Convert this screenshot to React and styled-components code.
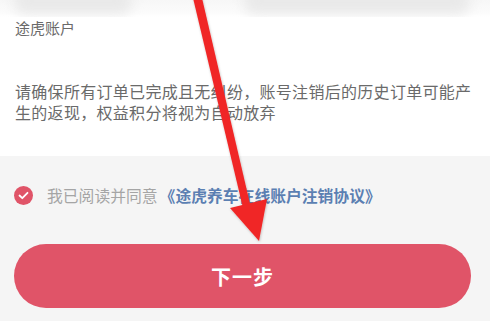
import React from "react";
import styled, { createGlobalStyle } from "styled-components";

const Global = createGlobalStyle`
  html, body { margin: 0; padding: 0; }
  body {
    background: #f5f5f5;
    font-family: "Noto Sans CJK SC", "Noto Sans", sans-serif;
    width: 490px;
    height: 321px;
    overflow: hidden;
  }
`;

const Page = styled.div`
  position: relative;
  width: 490px;
  height: 321px;
  display: flex;
  flex-direction: column;
  background: #f5f5f5;
`;

const WhiteSection = styled.section`
  background: #ffffff;
  height: 156px;
  display: flex;
  flex-direction: column;
`;

const BlurStrip = styled.div`
  height: 17px;
  display: flex;
  gap: 112px;
  padding: 0 20px 0 14px;
  overflow: hidden;
  background: linear-gradient(#f7f7f7, #fbfbfb 70%, #ffffff);
`;

const Blob = styled.div`
  height: 26px;
  margin-top: -12px;
  flex: ${(p) => p.$flex};
  border-radius: 12px;
  background: #e9e9e9;
  filter: blur(6px);
`;

const Label = styled.div`
  padding: 0 15px;
  margin-top: 1px;
  font-size: 15px;
  line-height: 20px;
  color: #6a6a6a;
`;

const Notice = styled.p`
  margin: 43px 0 0;
  padding: 0 14px 0 15px;
  font-size: 16px;
  letter-spacing: 0.3px;
  line-height: 21px;
  color: #6a6a6a;
`;

const AgreeRow = styled.div`
  display: flex;
  align-items: center;
  padding: 0 14px;
  margin-top: 28px;
  height: 22px;
  font-size: 15.8px;
`;

const CheckCircle = styled.span`
  width: 19px;
  height: 19px;
  border-radius: 50%;
  background: #e05468;
  display: inline-flex;
  align-items: center;
  justify-content: center;
  margin-right: 14px;
`;

const AgreeText = styled.span`
  color: #a5a5a5;
`;

const Link = styled.span`
  color: #5b7fb2;
  font-weight: 700;
  margin-left: 2px;
`;

const Button = styled.button`
  margin: 38px 19px 0 14px;
  height: 64px;
  border: none;
  border-radius: 32px;
  background: #e05468;
  color: #ffffff;
  font-family: "Noto Sans CJK SC", "Noto Sans", sans-serif;
  font-size: 20px;
  font-weight: 700;
  letter-spacing: 1px;
  display: flex;
  align-items: center;
  justify-content: center;
`;

const ArrowLayer = styled.svg`
  position: absolute;
  left: 0;
  top: 0;
  pointer-events: none;
`;

export default function App() {
  return (
    <>
      <Global />
      <Page>
        <WhiteSection>
          <BlurStrip>
            <Blob $flex="0 0 118px" />
            <Blob $flex="1" />
          </BlurStrip>
          <Label>途虎账户</Label>
          <Notice>
            请确保所有订单已完成且无纠纷，账号注销后的历史订单可能产生的返现，权益积分将视为自动放弃
          </Notice>
        </WhiteSection>
        <AgreeRow>
          <CheckCircle>
            <svg width="11" height="9" viewBox="0 0 11 9">
              <path d="M1.5 4.5 L4.3 7.2 L9.5 1.8" fill="none" stroke="#fff" strokeWidth="1.8" strokeLinecap="round" strokeLinejoin="round" />
            </svg>
          </CheckCircle>
          <AgreeText>我已阅读并同意</AgreeText>
          <Link>《途虎养车在线账户注销协议》</Link>
        </AgreeRow>
        <Button>下一步</Button>
        <ArrowLayer width="490" height="321" viewBox="0 0 490 321">
          <defs>
            <filter id="sh" x="-20%" y="-20%" width="140%" height="140%">
              <feDropShadow dx="0.5" dy="1" stdDeviation="1" floodColor="#000" floodOpacity="0.25" />
            </filter>
          </defs>
          <g filter="url(#sh)" fill="#f02828">
            <polygon points="193,-2 202,-2 251,208 243,208" />
            <polygon points="230,208 267,199 259,241" />
          </g>
        </ArrowLayer>
      </Page>
    </>
  );
}
